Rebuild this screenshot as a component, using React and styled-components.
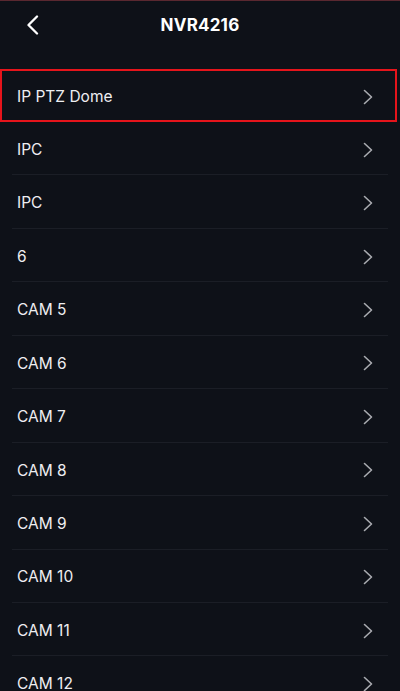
import React from 'react';
import styled, { createGlobalStyle } from 'styled-components';

// 페이지 기본 스타일
const GlobalStyle = createGlobalStyle`
    html, body {
        margin: 0;
        padding: 0;
        background: #0e1118;
    }
    body {
        font-family: Inter, "Liberation Sans", sans-serif;
        -webkit-font-smoothing: antialiased;
    }
`;

const Screen = styled.div`
    width: 400px;
    height: 691px;
    overflow: hidden;
    background: #0e1118;
    border-top: 1px solid #5a2830;
    box-sizing: border-box;
`;

// 상단 헤더
const Header = styled.div`
    display: grid;
    grid-template-columns: 60px 1fr 60px;
    align-items: center;
    height: 47px;
    margin-bottom: 21px;
`;

const BackButton = styled.button`
    display: flex;
    align-items: center;
    justify-content: flex-start;
    padding: 0 0 0 26px;
    height: 100%;
    background: none;
    border: none;
    cursor: pointer;
`;

const Title = styled.h1`
    margin: 0;
    text-align: center;
    color: #ffffff;
    font-size: 17px;
    font-weight: 700;
    letter-spacing: 0.2px;
`;

const List = styled.div`
    display: flex;
    flex-direction: column;
`;

// 채널 목록 한 줄
const Row = styled.div`
    display: flex;
    align-items: center;
    justify-content: space-between;
    box-sizing: border-box;
    height: ${(p) => (p.$selected ? '53px' : '53.45px')};
    flex-shrink: 0;
    margin: ${(p) => (p.$selected ? '0 3px 0 0' : '0 12px')};
    padding: ${(p) => (p.$selected ? '3px 22px 0 15px' : '3px 15px 0 5px')};
    border: ${(p) => (p.$selected ? '2px solid #e5141b' : 'none')};
    border-bottom: ${(p) => (p.$selected ? '2px solid #e5141b' : '1px solid #1b1e26')};
    color: #eeeef1;
    font-size: 15.5px;
    cursor: pointer;
`;

const Label = styled.span`
    line-height: 1;
`;

const BackIcon = () => (
    <svg width="14" height="20" viewBox="0 0 14 20">
        <path d="M11 1.5 L2.5 10 L11 18.5" fill="none" stroke="#ffffff" strokeWidth="2.3" strokeLinecap="round" strokeLinejoin="round" />
    </svg>
);

const Chevron = () => (
    <svg width="10" height="16" viewBox="0 0 10 16">
        <path d="M1.5 1.5 L8.5 8 L1.5 14.5" fill="none" stroke="#a9abb0" strokeWidth="1.6" strokeLinecap="round" strokeLinejoin="round" />
    </svg>
);

const channels = [
    'IP PTZ Dome',
    'IPC',
    'IPC',
    '6',
    'CAM 5',
    'CAM 6',
    'CAM 7',
    'CAM 8',
    'CAM 9',
    'CAM 10',
    'CAM 11',
    'CAM 12',
];

const App = () => {
    return (
        <>
            <GlobalStyle />
            <Screen>
                <Header>
                    <BackButton aria-label='back'>
                        <BackIcon />
                    </BackButton>
                    <Title>NVR4216</Title>
                    <span />
                </Header>
                <List>
                    {channels.map((name, i) => (
                        <Row key={i} $selected={i === 0}>
                            <Label>{name}</Label>
                            <Chevron />
                        </Row>
                    ))}
                </List>
            </Screen>
        </>
    );
};

export default App;
